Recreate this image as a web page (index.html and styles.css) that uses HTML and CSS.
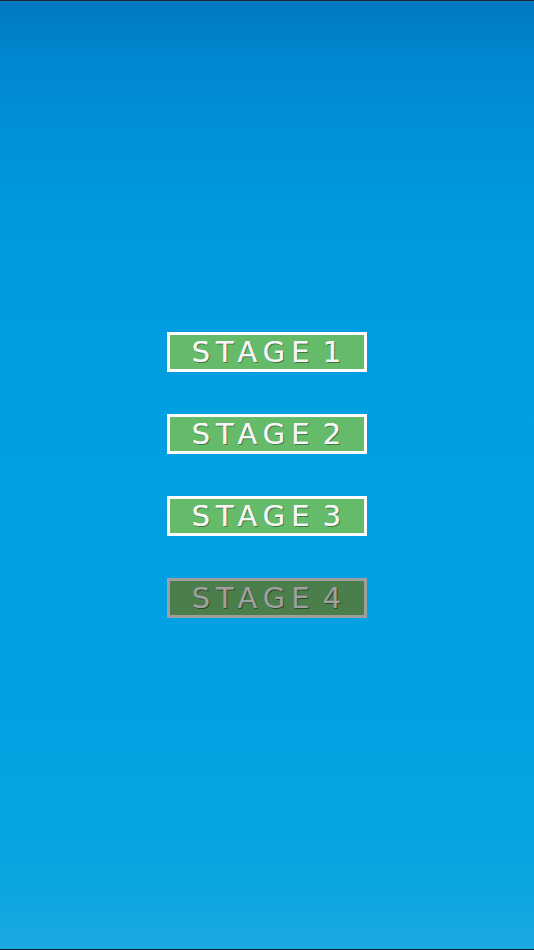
FILE: index.html
```html
<!DOCTYPE html>
<html>
<head>
<meta charset="utf-8">
<link rel="stylesheet" href="styles.css">
</head>
<body>
<main class="screen">
  <div class="menu">
    <button class="stage">STAGE 1</button>
    <button class="stage">STAGE 2</button>
    <button class="stage">STAGE 3</button>
    <button class="stage locked">STAGE 4</button>
  </div>
</main>
</body>
</html>
```
FILE: styles.css
```css
html, body {
  margin: 0;
  padding: 0;
}
body {
  width: 534px;
  height: 950px;
  overflow: hidden;
}
.screen {
  box-sizing: border-box;
  height: 950px;
  border-top: 1px solid #1a2a38;
  border-bottom: 1px solid #10222e;
  background: linear-gradient(to bottom,
    #0078c0 0px,
    #0088d0 60px,
    #0098dc 200px,
    #009fe2 400px,
    #00a2e2 700px,
    #0aa6e2 880px,
    #1ca7e0 950px);
  display: flex;
  align-items: center;
  justify-content: center;
}
.menu {
  display: flex;
  flex-direction: column;
  gap: 42px;
}
.stage {
  box-sizing: border-box;
  width: 200px;
  height: 40px;
  margin: 0;
  padding: 0 0 0 5px;
  border: 3px solid #ffffff;
  background: #66bb6a;
  color: #f6f6f6;
  font-family: "DejaVu Sans", sans-serif;
  font-size: 29px;
  line-height: 34px;
  letter-spacing: 6px;
  word-spacing: -8px;
  text-shadow: 1px 1px 0 rgba(30, 60, 30, 0.55), 0 0 0.6px #ffffff;
  display: flex;
  align-items: center;
  justify-content: center;
}
.stage.locked {
  background: #4b7e4b;
  border-color: #9e9e9e;
  color: #a0a0a0;
  text-shadow: 1px 1px 0 rgba(20, 40, 20, 0.6);
}
```
